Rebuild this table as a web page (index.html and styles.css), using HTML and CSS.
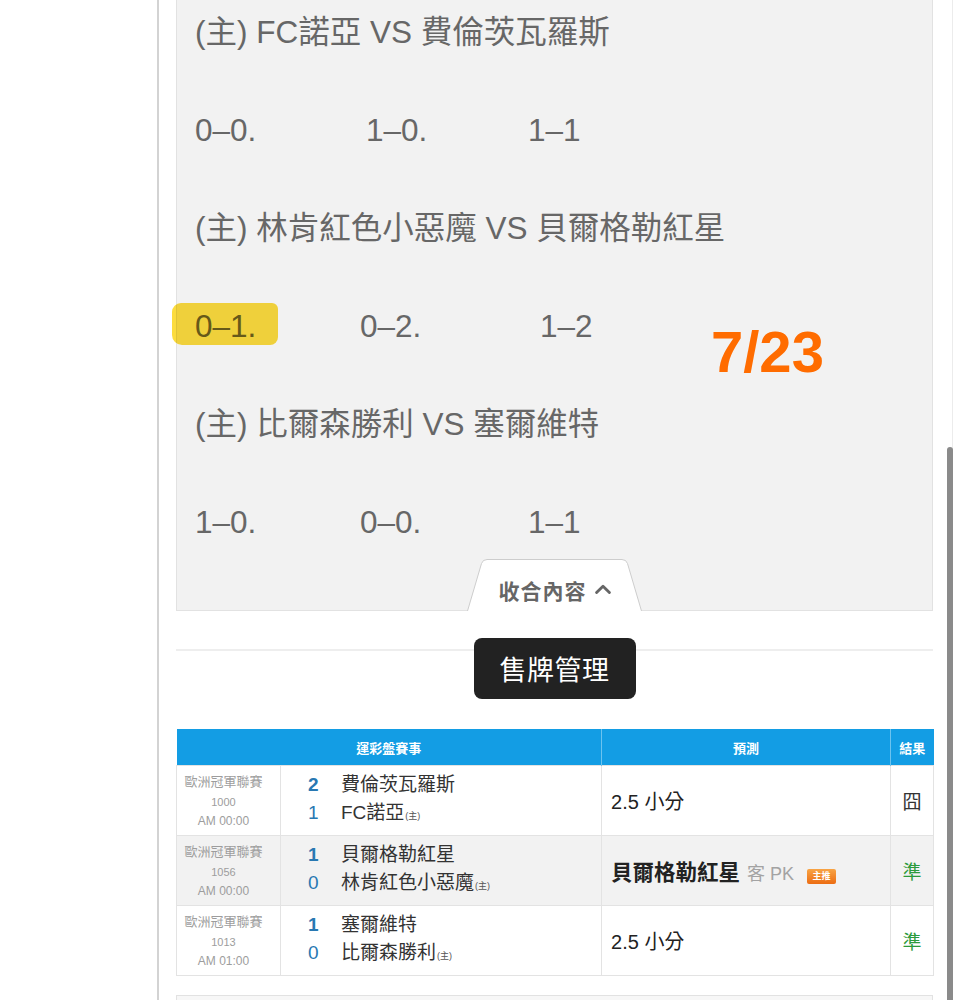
FILE: index.html
```html
<!DOCTYPE html>
<html lang="zh-Hant">
<head>
<meta charset="utf-8">
<title>售牌管理</title>
<link rel="stylesheet" href="styles.css">
</head>
<body>
<div class="page">
  <section class="scores">
    <p class="line">(主) FC諾亞 VS 費倫茨瓦羅斯</p>
    <p class="line"><span class="sc w171">0–0.</span><span class="sc w162">1–0.</span><span class="sc">1–1</span></p>
    <p class="line">(主) 林肯紅色小惡魔 VS 貝爾格勒紅星</p>
    <p class="line"><span class="mark"></span><span class="sc w165">0–1.</span><span class="sc w180">0–2.</span><span class="sc">1–2</span><span class="date">7/23</span></p>
    <p class="line">(主) 比爾森勝利 VS 塞爾維特</p>
    <p class="line"><span class="sc w165">1–0.</span><span class="sc w168">0–0.</span><span class="sc">1–1</span></p>
    <div class="tab-row">
      <div class="tab">
        <svg class="tab-bg" viewBox="0 0 175 53" width="175" height="53" aria-hidden="true">
          <path d="M0.5 53 L14.5 5.5 Q15.8 1.5 20 1.5 L155 1.5 Q159.2 1.5 160.5 5.5 L174.5 53 Z" fill="#ffffff"/>
          <path d="M0.5 53 L14.5 5.5 Q15.8 1.5 20 1.5 L155 1.5 Q159.2 1.5 160.5 5.5 L174.5 53" fill="none" stroke="#cdcdcd" stroke-width="1"/>
        </svg>
        <span class="tab-label">收合內容</span>
        <svg class="chev" viewBox="0 0 16 10" width="16" height="10" aria-hidden="true">
          <polyline points="1.6,8.6 8,2.2 14.4,8.6" fill="none" stroke="#666" stroke-width="2.8" stroke-linecap="round" stroke-linejoin="round"/>
        </svg>
      </div>
    </div>
  </section>

  <div class="divider"></div>
  <div class="btn-row"><span class="btn">售牌管理</span></div>

  <table class="picks">
    <colgroup><col class="c1"><col class="c2"><col class="c3"><col class="c4"></colgroup>
    <thead>
      <tr><th colspan="2">運彩盤賽事</th><th class="sep">預測</th><th class="sep">結果</th></tr>
    </thead>
    <tbody>
      <tr>
        <td class="meta"><div class="league">歐洲冠軍聯賽</div><div class="no">1000</div><div class="time">AM 00:00</div></td>
        <td class="teams">
          <div class="team"><span class="num win">2</span><span class="name">費倫茨瓦羅斯</span></div>
          <div class="team"><span class="num">1</span><span class="name">FC諾亞<small>(主)</small></span></div>
        </td>
        <td class="pick">2.5 小分</td>
        <td class="res">囧</td>
      </tr>
      <tr class="alt">
        <td class="meta"><div class="league">歐洲冠軍聯賽</div><div class="no">1056</div><div class="time">AM 00:00</div></td>
        <td class="teams">
          <div class="team"><span class="num win">1</span><span class="name">貝爾格勒紅星</span></div>
          <div class="team"><span class="num">0</span><span class="name">林肯紅色小惡魔<small>(主)</small></span></div>
        </td>
        <td class="pick"><b class="pick-team">貝爾格勒紅星</b><span class="pick-side">客 PK</span><span class="badge">主推</span></td>
        <td class="res ok">準</td>
      </tr>
      <tr>
        <td class="meta"><div class="league">歐洲冠軍聯賽</div><div class="no">1013</div><div class="time">AM 01:00</div></td>
        <td class="teams">
          <div class="team"><span class="num win">1</span><span class="name">塞爾維特</span></div>
          <div class="team"><span class="num">0</span><span class="name">比爾森勝利<small>(主)</small></span></div>
        </td>
        <td class="pick">2.5 小分</td>
        <td class="res ok">準</td>
      </tr>
    </tbody>
  </table>

  <div class="next-box"></div>
</div>
<div class="scrollbar"></div>
</body>
</html>
```

FILE: styles.css
```css
html, body {
  margin: 0;
  padding: 0;
  background: #ffffff;
}

body {
  font-family: "Liberation Sans", "Noto Sans CJK TC", sans-serif;
  color: #333333;
  overflow: hidden;
}

.page {
  margin: -18px 0 0 157px;
  width: 757px;
  min-height: 1060px;
  padding: 0 19px 0 17px;
  border-left: 2px solid #d3d3d3;
  border-right: 1px solid #ececec;
}

/* ---------- score box ---------- */
.scores {
  background: #f2f2f2;
  border: 1px solid #e2e2e2;
}

.line {
  position: relative;
  margin: 0;
  height: 98px;
  line-height: 98px;
  padding-left: 18px;
  font-size: 31.5px;
  color: #676767;
  white-space: nowrap;
}

.sc {
  display: inline-block;
  position: relative;
}
.w162 { width: 162px; }
.w165 { width: 165px; }
.w168 { width: 168px; }
.w171 { width: 171px; }
.w180 { width: 180px; }

.mark {
  position: absolute;
  left: -5px;
  top: 26px;
  width: 106px;
  height: 42px;
  background: #fcdc3e;
  border-radius: 9px 6px 8px 10px;
  mix-blend-mode: multiply;
  filter: blur(0.7px);
  z-index: 1;
}

.date {
  position: absolute;
  left: 534px;
  top: 46px;
  font-size: 58px;
  line-height: 58px;
  font-weight: 700;
  color: #ff6c00;
}

.tab-row {
  display: flex;
  justify-content: center;
  margin-top: -13px;
  margin-bottom: -1px;
}

.tab {
  position: relative;
  width: 175px;
  height: 53px;
  display: flex;
  align-items: center;
  justify-content: center;
  padding-top: 11px;
  box-sizing: border-box;
}

.tab-bg {
  position: absolute;
  left: 0;
  top: 0;
}

.tab-label {
  position: relative;
  font-family: "Noto Sans CJK TC", sans-serif;
  font-size: 21px;
  font-weight: 700;
  color: #666666;
  letter-spacing: 1px;
}

.chev {
  position: relative;
  margin-left: 8px;
  margin-top: -3px;
}

/* ---------- section header ---------- */
.divider {
  margin-top: 38px;
  border-top: 2px solid #eeeeee;
}

.btn-row {
  display: flex;
  justify-content: center;
  margin-top: -13px;
}

.btn {
  display: inline-flex;
  align-items: center;
  justify-content: center;
  width: 162px;
  height: 61px;
  background: #222222;
  color: #ffffff;
  border-radius: 8px;
  font-family: "Noto Sans CJK TC", sans-serif;
  font-size: 27px;
  letter-spacing: 0.5px;
}

/* ---------- table ---------- */
.picks {
  margin-top: 30px;
  width: 757px;
  border-collapse: collapse;
  table-layout: fixed;
}

.c1 { width: 104px; }
.c2 { width: 321px; }
.c3 { width: 289px; }
.c4 { width: 43px; }

.picks th {
  height: 36px;
  padding: 0;
  background: #139de4;
  color: #ffffff;
  font-family: "Noto Sans CJK TC", sans-serif;
  font-size: 13px;
  font-weight: 700;
  text-align: center;
  border: 0;
}

.picks th.sep {
  border-left: 1px solid #6cc3ef;
}

.picks td {
  height: 69px;
  padding: 0;
  border: 1px solid #e3e3e3;
  vertical-align: middle;
}

.picks tr.alt td {
  background: #f2f2f2;
}

.meta {
  text-align: center;
  color: #9d9d9d;
  padding-right: 10px !important;
}
.league { font-size: 13px; line-height: 20px; }
.no { font-size: 11px; line-height: 20px; font-family: "Liberation Sans", sans-serif; }
.time { font-size: 12px; line-height: 18px; font-family: "Liberation Sans", sans-serif; }

.teams {
  padding-left: 27px !important;
}

.team {
  display: flex;
  align-items: baseline;
  line-height: 28px;
  font-size: 19px;
}

.num {
  width: 33px;
  color: #2878b2;
  font-family: "Liberation Sans", sans-serif;
}
.num.win { font-weight: 700; }

.name {
  color: #333333;
}
.name small {
  font-size: 9px;
  color: #555555;
  margin-left: 1px;
}

.pick {
  padding-left: 9px !important;
  font-size: 20px;
  color: #222222;
  white-space: nowrap;
}

.pick-team {
  font-size: 21.5px;
  font-weight: 700;
}

.pick-side {
  margin-left: 7px;
  font-size: 18px;
  color: #a3a3a3;
}

.badge {
  display: inline-block;
  margin-left: 13px;
  width: 29px;
  height: 15px;
  line-height: 15px;
  background: linear-gradient(#f8a445, #ec6d13);
  border-radius: 2px;
  color: #ffffff;
  font-size: 9px;
  font-weight: 700;
  text-align: center;
  vertical-align: 1px;
}

.res {
  text-align: center;
  font-size: 19px;
  color: #333333;
}
.res.ok { color: #2c9a3c; }

.next-box {
  margin-top: 19px;
  height: 40px;
  border: 1px solid #e2e2e2;
  background: #f7f7f7;
}

/* ---------- scrollbar overlay ---------- */
.scrollbar {
  position: fixed;
  left: 947px;
  top: 447px;
  width: 6px;
  height: 580px;
  background: #8a8a8a;
  border-radius: 3px;
}
```
